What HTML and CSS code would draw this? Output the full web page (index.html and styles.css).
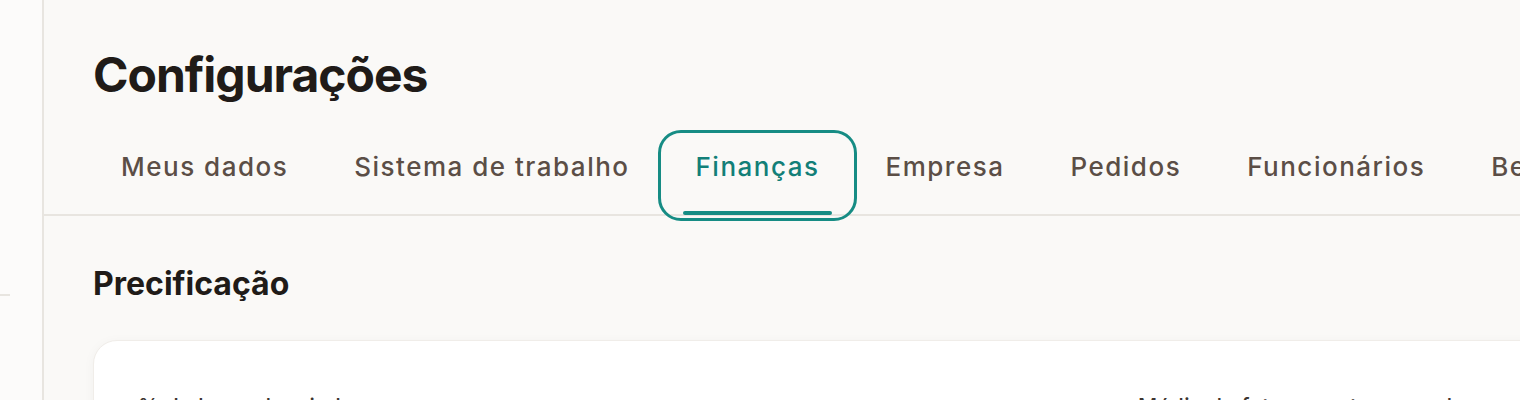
FILE: index.html
```html
<!DOCTYPE html>
<html lang="pt-BR">
<head>
<meta charset="utf-8">
<title>Configurações</title>
<link rel="stylesheet" href="styles.css">
</head>
<body>
<div class="app">
  <aside class="sidebar">
    <div class="sidebar-sep"></div>
  </aside>
  <main class="main">
    <header class="header">
      <h1 class="page-title">Configurações</h1>
    </header>
    <nav class="tabs">
      <button class="tab">Meus dados</button>
      <button class="tab">Sistema de trabalho</button>
      <button class="tab tab-active">Finanças</button>
      <button class="tab">Empresa</button>
      <button class="tab">Pedidos</button>
      <button class="tab">Funcionários</button>
      <button class="tab">Benefícios</button>
    </nav>
    <section class="section">
      <h2 class="section-title">Precificação</h2>
      <div class="card">
        <div class="field">
          <label class="field-label">% de lucro desejado</label>
        </div>
        <div class="field">
          <label class="field-label">Média de faturamento mensal</label>
        </div>
      </div>
    </section>
  </main>
</div>
</body>
</html>
```

FILE: styles.css
```css
html, body {
  margin: 0;
  padding: 0;
  overflow: hidden;
  background: #faf9f7;
}

body {
  font-family: "Inter", "Noto Sans", sans-serif;
  color: #201b18;
}

.app {
  display: flex;
  min-height: 400px;
  width: 2200px;
}

.sidebar {
  width: 42px;
  flex: none;
  background: #fcfbfa;
  border-right: 2px solid #e8e5e0;
}

.sidebar-sep {
  margin-top: 294px;
  width: 10px;
  height: 2px;
  background: #e8e5e0;
}

.main {
  flex: 1;
  display: flex;
  flex-direction: column;
}

.header {
  padding: 46px 49px 0;
}

.page-title {
  margin: 0;
  font-size: 48px;
  line-height: 58px;
  font-weight: 700;
  letter-spacing: -1px;
  color: #201b18;
}

.tabs {
  display: flex;
  margin-top: 31px;
  padding-left: 44px;
  border-bottom: 2px solid #e8e5e0;
}

.tab {
  position: relative;
  margin-bottom: -2px;
  padding: 17px 33px 34px;
  border: 0;
  background: transparent;
  font-family: "Inter", "Noto Sans", sans-serif;
  font-size: 26px;
  line-height: 30px;
  font-weight: 500;
  letter-spacing: 1.5px;
  color: #5b4e46;
  white-space: nowrap;
  border-radius: 18px;
  cursor: pointer;
}

.tab-active {
  color: #127f78;
  outline: 3px solid #168c84;
  outline-offset: 2px;
}

.tab-active::after {
  content: "";
  position: absolute;
  left: 20px;
  right: 20px;
  bottom: 1px;
  height: 4px;
  border-radius: 2px;
  background: #168c84;
}

.section {
  padding: 48px 49px 0;
}

.section-title {
  margin: 0;
  font-size: 32px;
  line-height: 40px;
  font-weight: 700;
  letter-spacing: 0;
  color: #201b18;
}

.card {
  margin-top: 36px;
  display: grid;
  grid-template-columns: 1fr 1fr;
  column-gap: 32px;
  padding: 54px 44px 40px;
  background: #ffffff;
  border: 1px solid #f0ede9;
  border-radius: 24px;
  box-shadow: 0 2px 12px rgba(60, 50, 40, 0.04);
}

.field-label {
  display: block;
  font-size: 21px;
  line-height: 24px;
  font-weight: 500;
  letter-spacing: 0.6px;
  color: #3d3530;
}
```
